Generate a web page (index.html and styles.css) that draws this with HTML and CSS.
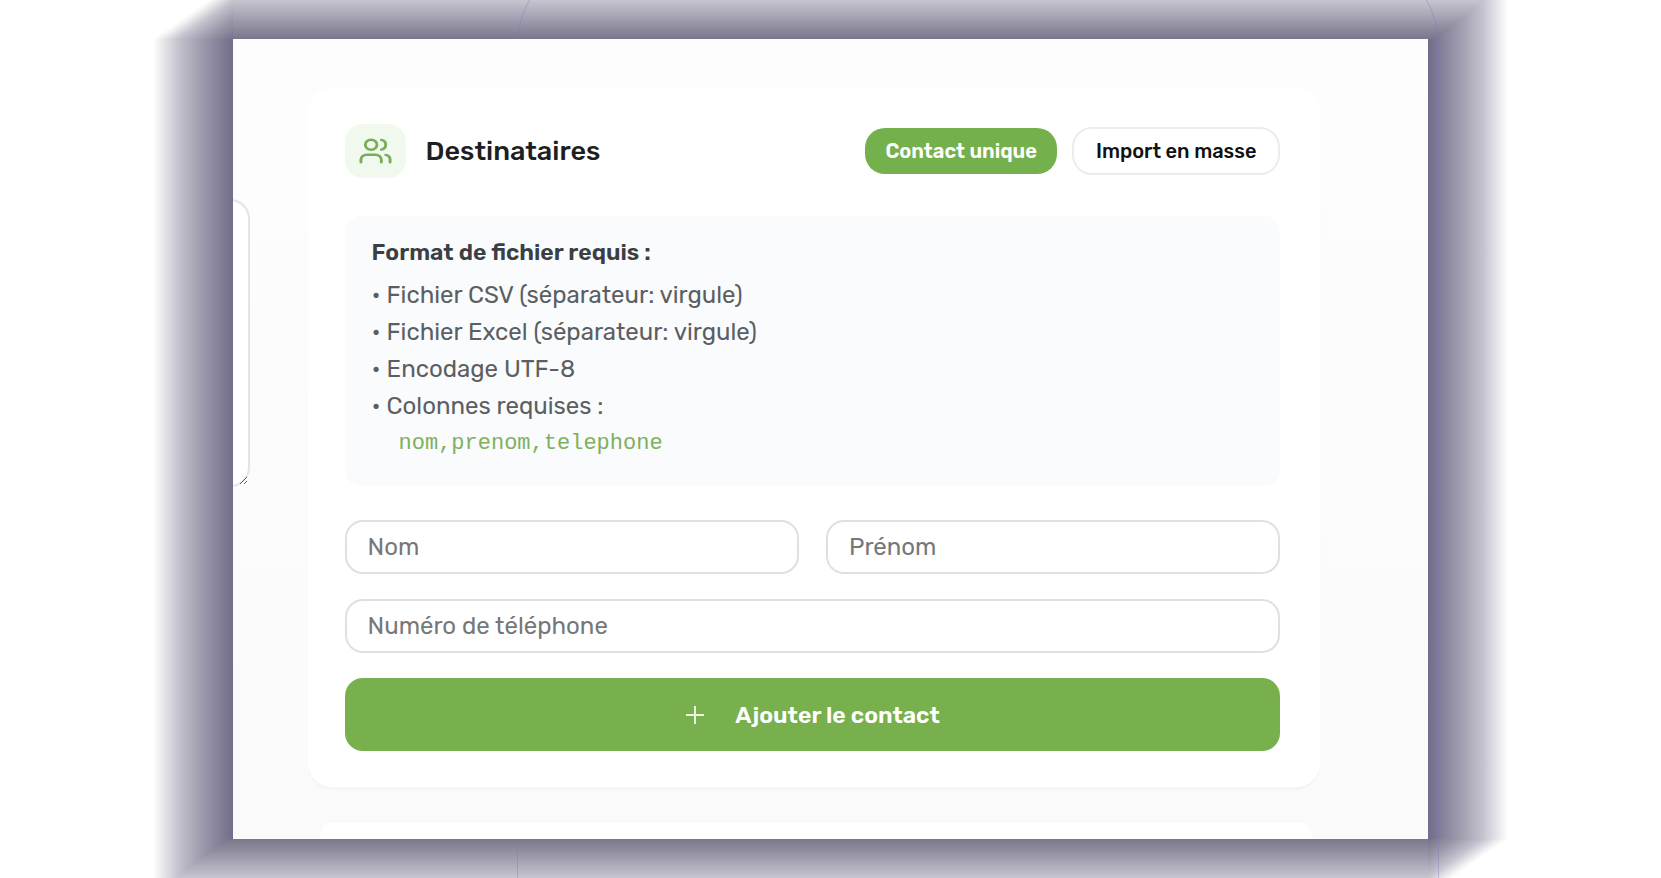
FILE: index.html
```html
<!DOCTYPE html>
<html lang="fr">

<head>
    <meta charset="UTF-8">
    <meta name="viewport" content="width=device-width, initial-scale=1.0">
    <title>Destinataires</title>
    <link rel="stylesheet" href="styles.css">
</head>

<body>

    <div class="frame">
        <!-- Shadow around the panel -->
        <div class="shade top-left"></div>
        <div class="shade top"></div>
        <div class="shade top-right"></div>
        <div class="shade left"></div>
        <div class="shade right"></div>
        <div class="shade bottom-left"></div>
        <div class="shade bottom"></div>
        <div class="shade bottom-right"></div>
        <div class="outline"></div>

        <main class="panel">
            <div class="message-column">
                <textarea class="message" aria-label="Message"></textarea>
            </div>

            <div class="content">
                <section class="card">
                    <header class="card-header">
                        <span class="icon-box">
                            <svg class="icon-users" viewBox="0 0 24 24" preserveAspectRatio="none" aria-hidden="true">
                                <path d="M16 21v-2a4 4 0 0 0-4-4H6a4 4 0 0 0-4 4v2" />
                                <circle cx="9" cy="7" r="4" />
                                <path d="M22 21v-2a4 4 0 0 0-3-3.87" />
                                <path d="M16 3.13a4 4 0 0 1 0 7.75" />
                            </svg>
                        </span>
                        <h2>Destinataires</h2>
                        <div class="tabs">
                            <button type="button" class="tab active">Contact unique</button>
                            <button type="button" class="tab">Import en masse</button>
                        </div>
                    </header>

                    <!-- File format help -->
                    <div class="format-info">
                        <h3>Format de fichier requis :</h3>
                        <p>• Fichier CSV (séparateur: virgule)</p>
                        <p>• Fichier Excel (séparateur: virgule)</p>
                        <p>• Encodage UTF-8</p>
                        <p>• Colonnes requises :</p>
                        <code>nom,prenom,telephone</code>
                    </div>

                    <!-- Contact form -->
                    <form class="contact-form">
                        <input type="text" aria-label="Nom" placeholder="Nom">
                        <input type="text" aria-label="Prénom" placeholder="Prénom">
                        <input type="tel" class="full" aria-label="Numéro de téléphone" placeholder="Numéro de téléphone">
                        <button type="button" class="add-button full">
                            <svg class="icon-plus" viewBox="0 0 20 20" aria-hidden="true">
                                <path d="M10 1v18M1 10h18" />
                            </svg>
                            Ajouter le contact
                        </button>
                    </form>
                </section>

                <section class="next-card"></section>
            </div>
        </main>
    </div>

</body>

</html>
```
FILE: styles.css
```css
* {
    box-sizing: border-box;
}

html {
    overflow: auto;
}

body {
    font-family: Rubik, Inter, "Liberation Sans", sans-serif;
    margin: 0;
    min-height: 100vh;
    background-color: #fff;
    overflow: hidden;
}

h2,
h3,
p {
    margin: 0;
}

/* Panel and the shadow around it */
.frame {
    --fade-x: #716c88 0, #a5a2b3 36px, #c8c5d0 56px, #efeff1 73px, #fff 80px;
    --fade-y: #7a768c 0, #a5a2b3 22px, #c8c5d0 39px, #efeff1 51px, #fff 56px;
    --fade-corner: #757189 0, #a5a2b3 22%, #c8c5d0 35%, #efeff1 45%, #fff 50%;
    position: relative;
    display: grid;
    grid-template-columns: 80px 1fr 80px;
    grid-template-rows: 56px auto 56px;
    width: calc(72vw + 160px);
    margin: -17px auto;
}

.top-left {
    background: linear-gradient(to top left, var(--fade-corner));
}

.top {
    background: linear-gradient(to top, var(--fade-y));
}

.top-right {
    background: linear-gradient(to right, var(--fade-x)), linear-gradient(to top, var(--fade-y));
    background-blend-mode: lighten;
}

.left {
    grid-area: 2 / 1;
    background: linear-gradient(to left, var(--fade-x));
}

.right {
    grid-area: 2 / 3;
    background: linear-gradient(to right, var(--fade-x));
}

.bottom-left {
    grid-area: 3 / 1;
    background: linear-gradient(to left, var(--fade-x)), linear-gradient(to bottom, var(--fade-y));
    background-blend-mode: lighten;
}

.bottom {
    grid-area: 3 / 2;
    background: linear-gradient(to bottom, var(--fade-y));
}

.bottom-right {
    grid-area: 3 / 3;
    background: linear-gradient(to bottom right, var(--fade-corner));
}

/* Thin violet contour showing through the shadow */
.outline {
    position: absolute;
    top: -28px;
    right: 69px;
    bottom: 0;
    width: 68%;
    border: 1px solid rgba(128, 116, 200, 0.35);
    border-bottom: none;
    border-radius: 90px 90px 0 0;
}

.panel {
    grid-area: 2 / 2;
    position: relative;
    display: grid;
    grid-template-columns: 17px 1fr;
    background: linear-gradient(#fdfdfd, #fafafb);
    overflow: hidden;
}

.message-column {
    display: flex;
    justify-content: flex-end;
    align-items: flex-start;
    padding-top: 160px;
}

.message {
    flex-shrink: 0;
    width: 240px;
    height: 288px;
    border: 2px solid #e4e4e4;
    border-radius: 20px;
    background-color: #fff;
}

.content {
    padding: 49px 108px 0 58px;
}

.card {
    padding: 36px 40px 36px 37px;
    background-color: #fff;
    border-radius: 24px;
    box-shadow: 0 3px 1px #f5f5f6;
}

.next-card {
    height: 16px;
    margin: 36px 8px 0 12px;
    background-color: #fff;
    border-radius: 12px 12px 0 0;
}

/* Card header */
.card-header {
    display: flex;
    align-items: center;
}

.icon-box {
    display: flex;
    align-items: center;
    justify-content: center;
    width: 61px;
    height: 54px;
    margin-right: 20px;
    border-radius: 18px;
    background-color: #f1f9ee;
}

.icon-users {
    width: 35px;
    height: 30px;
    fill: none;
    stroke: #7bad58;
    stroke-width: 2;
    stroke-linecap: round;
    stroke-linejoin: round;
}

.card-header h2 {
    font-size: 27px;
    font-weight: 500;
    line-height: 32px;
    color: #1d1f23;
}

.tabs {
    display: flex;
    align-items: center;
    gap: 15px;
    margin-left: auto;
}

.tab {
    height: 48px;
    padding: 0 22px;
    border: 2px solid #ececec;
    border-radius: 20px;
    background-color: #fff;
    color: #111;
    font-family: inherit;
    font-size: 20px;
    font-weight: 500;
}

.tab.active {
    height: 46px;
    padding: 0 20px;
    border: none;
    background-color: #74b04c;
    color: #fff;
    font-weight: 600;
}

/* Format help */
.format-info {
    margin-top: 38px;
    padding: 18px 27px 24px;
    border-radius: 16px;
    background-color: #f9fbfc;
    color: #5b5e62;
    font-size: 24px;
    line-height: 37px;
}

.format-info h3 {
    margin-bottom: 6px;
    color: #3b3f44;
    font-size: 23px;
    font-weight: 600;
}

.format-info code {
    display: block;
    padding-left: 27px;
    color: #7fb05e;
    font-family: Consolas, "Liberation Mono", monospace;
    font-size: 22px;
}

/* Contact form */
.contact-form {
    display: grid;
    grid-template-columns: 1fr 1fr;
    gap: 25px 27px;
    margin-top: 34px;
}

.full {
    grid-column: 1 / -1;
}

.contact-form input {
    width: 100%;
    height: 54px;
    padding: 0 21px;
    border: 2px solid #e0e0e0;
    border-radius: 18px;
    background-color: #fff;
    font-family: inherit;
    font-size: 24px;
}

.contact-form input::placeholder {
    color: #777;
}

.add-button {
    display: flex;
    align-items: center;
    justify-content: center;
    gap: 30px;
    height: 73px;
    border: none;
    border-radius: 18px;
    background-color: #78b04e;
    color: #fff;
    font-family: inherit;
    font-size: 23px;
    font-weight: 600;
}

.icon-plus {
    width: 20px;
    height: 20px;
    fill: none;
    stroke: #e9f8dc;
    stroke-width: 2;
}
```
